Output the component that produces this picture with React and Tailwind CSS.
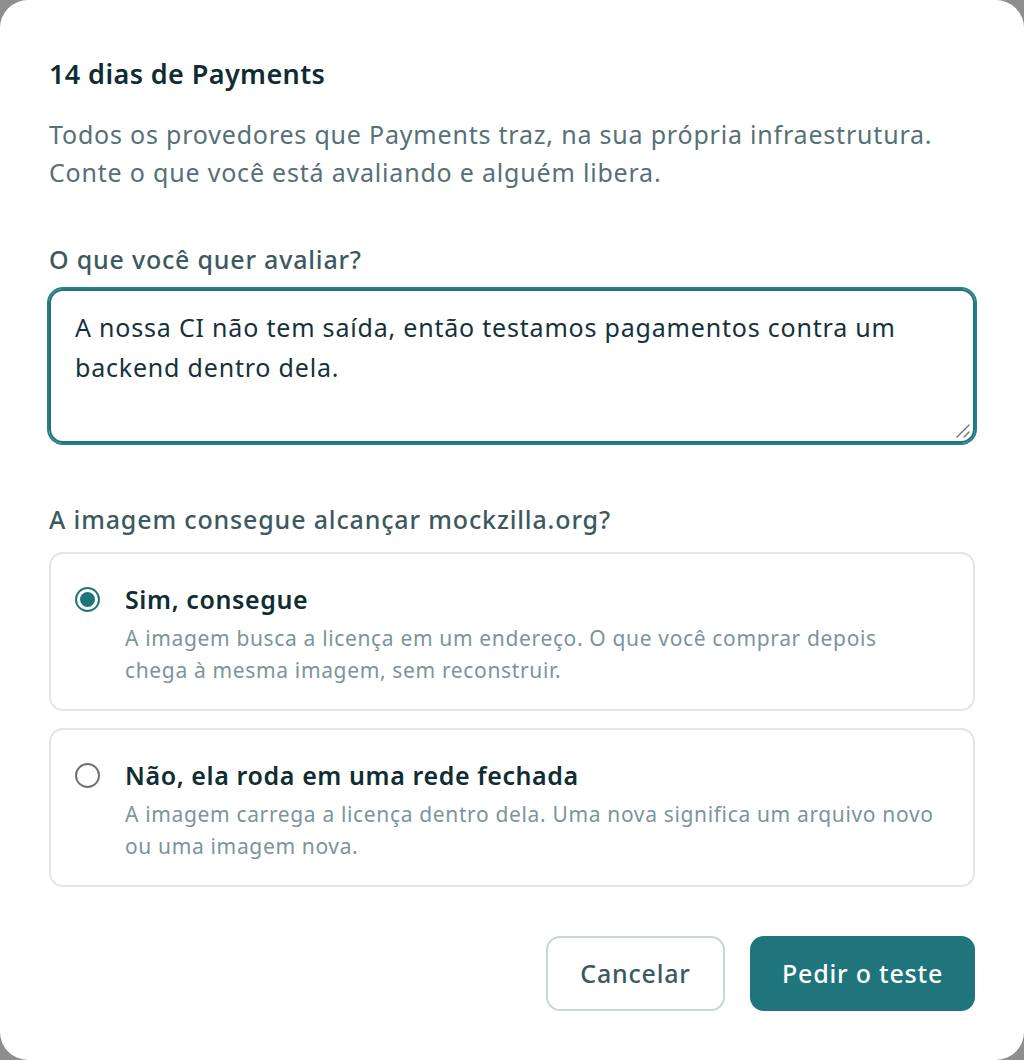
import React, { useState } from 'react';

const options = [
  {
    id: 'online',
    title: 'Sim, consegue',
    lines: [
      'A imagem busca a licença em um endereço. O que você comprar depois',
      'chega à mesma imagem, sem reconstruir.',
    ],
  },
  {
    id: 'offline',
    title: 'Não, ela roda em uma rede fechada',
    lines: [
      'A imagem carrega a licença dentro dela. Uma nova significa um arquivo novo',
      'ou uma imagem nova.',
    ],
  },
];

const RadioCard = ({ option, checked, onSelect }) => (
  <label
    className="flex cursor-pointer items-start gap-[25px] rounded-[14px] border-2 border-[#dfe6e5] bg-white pl-[24px] pr-[20px] pt-[25px] pb-[23px]"
    onClick={() => onSelect(option.id)}
  >
    <span className="flex h-[40px] items-center">
      {checked ? (
        <span className="flex h-[25px] w-[25px] items-center justify-center rounded-full border-2 border-[#1f757b]">
          <span className="h-[15px] w-[15px] rounded-full bg-[#1f757b]" />
        </span>
      ) : (
        <span className="h-[25px] w-[25px] rounded-full border-2 border-[#707070]" />
      )}
    </span>
    <span className="flex flex-col">
      <span className="text-[25px] font-semibold leading-[40px] tracking-[0.6px] text-[#102d34]">
        {option.title}
      </span>
      <span className="mt-[3px] text-[21px] leading-[32px] tracking-[0.65px] text-[#7c9599]">
        {option.lines.map((l) => (
          <span key={l} className="block whitespace-nowrap">
            {l}
          </span>
        ))}
      </span>
    </span>
  </label>
);

export default function App() {
  const [choice, setChoice] = useState('online');
  const [text, setText] = useState(
    'A nossa CI não tem saída, então testamos pagamentos contra um backend dentro dela.'
  );

  return (
    <div
      className="min-h-[1060px] bg-[#8e8e8e]"
      style={{ fontFamily: '"Noto Sans", "Open Sans", sans-serif' }}
    >
      <div className="flex h-[1060px] flex-col rounded-[28px] bg-white px-[49px] pt-[58px]">
        <h2 className="text-[27px] font-semibold leading-[32px] tracking-[0.4px] text-[#0f2c33]">
          14 dias de Payments
        </h2>
        <p className="mt-[25px] text-[25px] leading-[38px] tracking-[0.8px] text-[#557076]">
          Todos os provedores que Payments traz, na sua própria infraestrutura.
          <br />
          Conte o que você está avaliando e alguém libera.
        </p>

        <label className="mt-[52px] text-[25px] font-medium leading-[32px] tracking-[0.8px] text-[#3c5960]">
          O que você quer avaliar?
        </label>
        <div className="relative mt-[14px]">
          <textarea
            value={text}
            onChange={(e) => setText(e.target.value)}
            className="block h-[154px] w-full resize-none rounded-[14px] border-2 border-[#1f757b] px-[24px] pt-[16px] text-[25px] leading-[40px] tracking-[0.8px] text-[#15323a] shadow-[0_0_0_2px_#2a7f85] outline-none"
          />
          {/* resize grip */}
          <svg
            className="pointer-events-none absolute bottom-[5px] right-[5px] h-[14px] w-[14px]"
            viewBox="0 0 14 14"
            stroke="#707070"
            strokeWidth="1.3"
            strokeLinecap="round"
            aria-hidden="true"
          >
            <path d="M1 13 13 1M8 13l5-5" />
          </svg>
        </div>

        <p className="mt-[60px] text-[25px] font-medium leading-[32px] tracking-[0.85px] text-[#3c5960]">
          A imagem consegue alcançar mockzilla.org?
        </p>
        <div className="mt-[17px] flex flex-col gap-[17px]">
          {options.map((o) => (
            <RadioCard key={o.id} option={o} checked={choice === o.id} onSelect={setChoice} />
          ))}
        </div>

        <div className="mt-[49px] flex justify-end gap-[25px]">
          <button className="h-[75px] w-[179px] rounded-[14px] border-2 border-[#c9d6d4] bg-white text-[25px] font-medium tracking-[0.8px] text-[#3c5960]">
            Cancelar
          </button>
          <button className="h-[75px] w-[225px] rounded-[14px] bg-[#1f757b] text-[25px] font-medium tracking-[0.8px] text-white">
            Pedir o teste
          </button>
        </div>
      </div>
    </div>
  );
}
